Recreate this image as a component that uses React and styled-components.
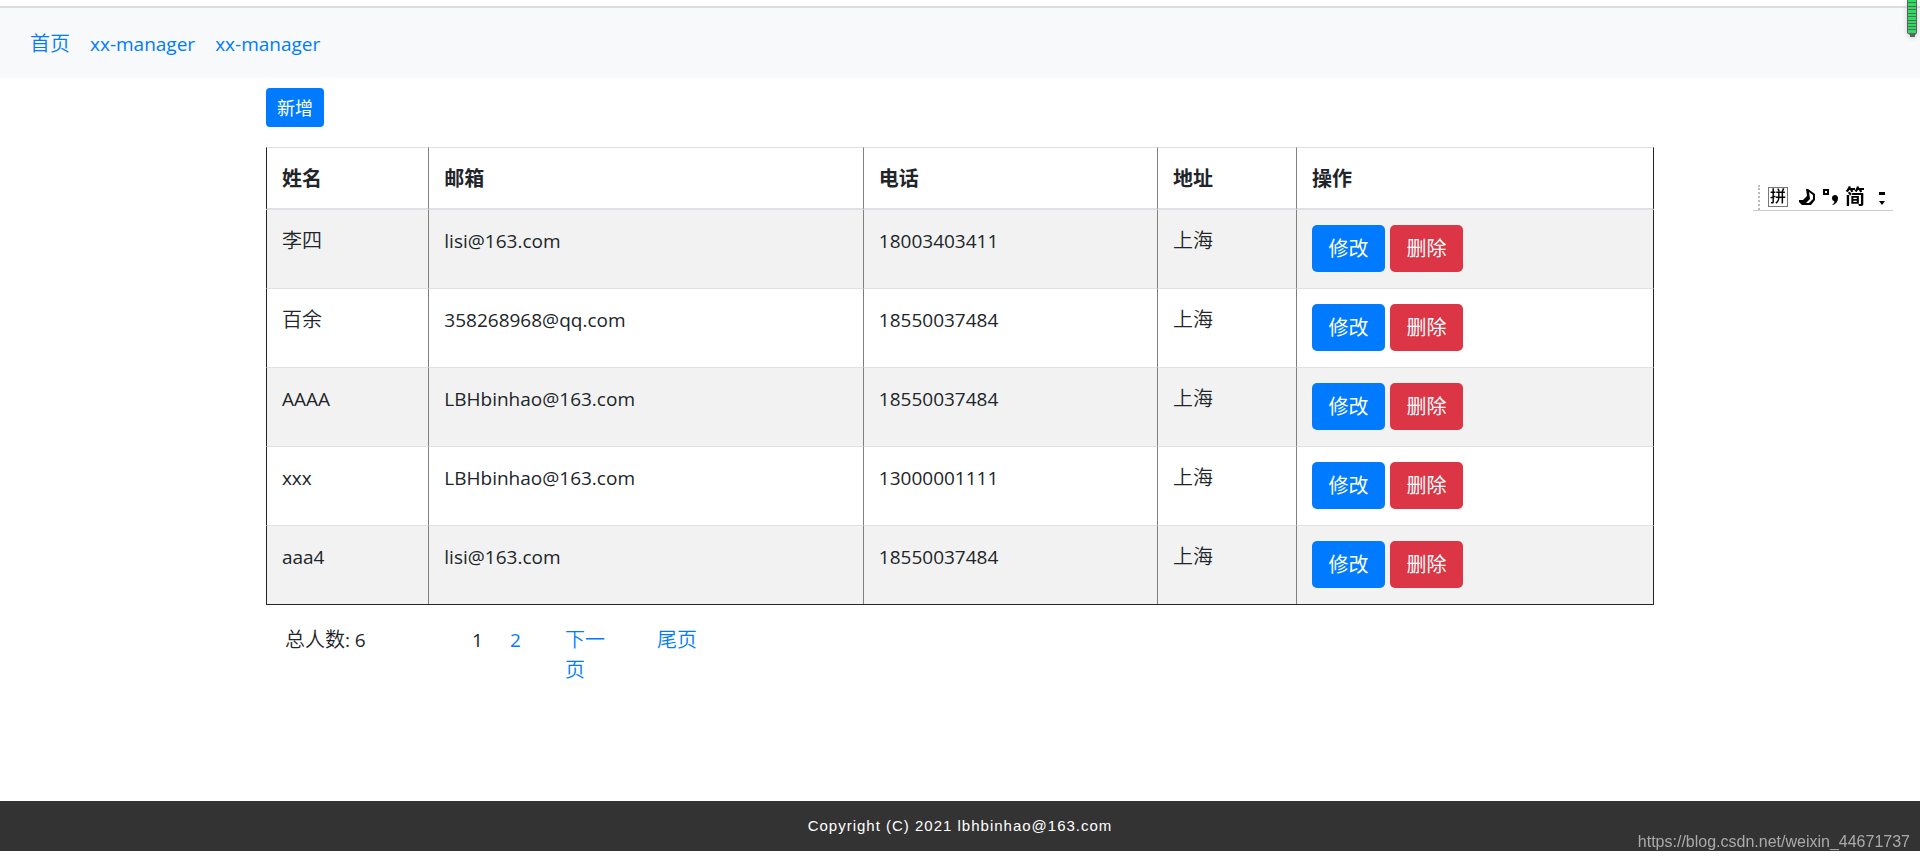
import styled, { createGlobalStyle } from "styled-components";

const GlobalStyle = createGlobalStyle`
  *,
  *::before,
  *::after {
    box-sizing: border-box;
  }

  body {
    margin: 0;
    background-color: #fff;
    color: #212529;
    font-family: "Open Sans", "Noto Sans CJK SC", sans-serif;
    font-size: 19px;
    font-weight: 400;
    line-height: 30px;
  }
`;

const blue = "#007bff";
const red = "#dc3545";

const Page = styled.div`
  min-height: 100vh;
  padding: 6px 0 10px;
  display: flex;
  flex-direction: column;
`;

const Navbar = styled.nav`
  display: flex;
  gap: 20px;
  padding: 21px 30px 19px;
  border-top: 2px solid #dadde1;
  background-color: #f8f9fa;
`;

const Link = styled.a`
  color: ${blue};
  text-decoration: none;
`;

// Chinese text is set one size up and lighter than the latin text
const Zh = styled.span`
  font-family: "Noto Sans CJK SC DemiLight", "Noto Sans CJK SC", sans-serif;
  font-size: 20px;
  font-weight: 350;
  line-height: 20px;
`;

const Container = styled.main`
  flex: 1;
  width: 72.3%;
  margin: 0 auto;
  padding-top: 10px;
`;

const Button = styled.button`
  min-width: 73px;
  height: 47px;
  padding: 0 15px;
  border: none;
  border-radius: 5px;
  background-color: ${(props) => props.$color || blue};
  color: #fff;
  font: inherit;
  font-size: 20px;
  cursor: pointer;
`;

const AddButton = styled(Button)`
  display: block;
  min-width: 58px;
  height: 39px;
  padding: 0 10px;
  border-radius: 4px;
  font-size: 18px;
`;

const Table = styled.table`
  width: 100%;
  margin: 20px 0;
  table-layout: fixed;
  border-spacing: 0;
  border-bottom: 1px solid #212529;

  th,
  td {
    border-left: 1px solid #808080;
  }

  th:first-child,
  td:first-child {
    border-left-color: #212529;
  }

  th:last-child,
  td:last-child {
    border-right: 1px solid #212529;
  }
`;

const Col = styled.col`
  width: ${(props) => props.$width};
`;

const Th = styled.th`
  height: 63px;
  padding: 16px 15px 14px;
  border-top: 1px solid #dee2e6;
  border-bottom: 2px solid #dee2e6;
  font-size: 20px;
  font-weight: 700;
  text-align: left;
`;

const Tr = styled.tr`
  &:nth-of-type(odd) {
    background-color: #f2f2f2;
  }

  & + & td {
    border-top: 1px solid #dee2e6;
  }
`;

const Td = styled.td`
  height: 79px;
  padding: ${(props) => (props.$actions ? "15px" : "16px 15px 14px")};
  vertical-align: top;

  ${Tr}:first-child & {
    height: 78px;
  }
`;

const Actions = styled.div`
  display: flex;
  gap: 5px;
`;

const Pager = styled.div`
  display: flex;
  padding-left: 19px;
`;

const PageItem = styled.div`
  width: ${(props) => props.$width};
`;

const PageLink = styled(Link)`
  display: block;
  max-width: 50px;
`;

const Footer = styled.footer`
  display: flex;
  align-items: center;
  justify-content: center;
  height: 50px;
  background-color: #333;
  color: #fff;
  font-family: "Liberation Sans", Arial, sans-serif;
  font-size: 15px;
  letter-spacing: 1px;
`;

const Watermark = styled.div`
  position: fixed;
  right: 10px;
  bottom: 4px;
  color: #aaa;
  font-family: "Liberation Sans", Arial, sans-serif;
  font-size: 16px;
`;

const Battery = styled.svg`
  position: fixed;
  top: 0;
  right: 2px;
  filter: drop-shadow(0 1px 2px #ccc);
`;

const ImeBar = styled.div`
  position: fixed;
  top: 184px;
  right: 27px;
  display: grid;
  grid-template-columns: 10px 30px 25px 22px 33px 8px;
  align-items: center;
  height: 27px;
  padding: 0 7px 0 5px;
  border-bottom: 1px solid #ccc;
  color: #000;
  font-size: 20px;
  font-weight: 700;
  line-height: 20px;
`;

const ImeGrip = styled.div`
  height: 25px;
  border-left: 2px dotted #bbb;
`;

const ImeMode = styled.div`
  width: 20px;
  height: 20px;
  border: 1px solid #777;
  font-size: 16px;
  font-weight: 500;
  line-height: 17px;
  text-align: center;
`;

const columns = [
  { title: "姓名", width: "11.7%" },
  { title: "邮箱", width: "31.3%" },
  { title: "电话", width: "21.2%" },
  { title: "地址", width: "10%" },
  { title: "操作", width: "25.8%" },
];

const users = [
  { name: "李四", zh: true, email: "lisi@163.com", phone: "18003403411" },
  { name: "百余", zh: true, email: "358268968@qq.com", phone: "18550037484" },
  { name: "AAAA", email: "LBHbinhao@163.com", phone: "18550037484" },
  { name: "xxx", email: "LBHbinhao@163.com", phone: "13000001111" },
  { name: "aaa4", email: "lisi@163.com", phone: "18550037484" },
];

const cells = [2, 6, 9, 13, 16, 20, 23, 26, 29];

const App = () => {
  return (
    <Page>
      <GlobalStyle />
      <Navbar>
        <Link href="#">
          <Zh>首页</Zh>
        </Link>
        <Link href="#">xx-manager</Link>
        <Link href="#">xx-manager</Link>
      </Navbar>
      <Container>
        <AddButton>新增</AddButton>
        <Table>
          <colgroup>
            {columns.map((c) => (
              <Col key={c.title} $width={c.width} />
            ))}
          </colgroup>
          <thead>
            <tr>
              {columns.map((c) => (
                <Th key={c.title}>{c.title}</Th>
              ))}
            </tr>
          </thead>
          <tbody>
            {users.map((u) => (
              <Tr key={u.name}>
                <Td>{u.zh ? <Zh>{u.name}</Zh> : u.name}</Td>
                <Td>{u.email}</Td>
                <Td>{u.phone}</Td>
                <Td>
                  <Zh>上海</Zh>
                </Td>
                <Td $actions>
                  <Actions>
                    <Button>修改</Button>
                    <Button $color={red}>删除</Button>
                  </Actions>
                </Td>
              </Tr>
            ))}
          </tbody>
        </Table>
        <Pager>
          <PageItem $width="187px">
            <Zh>总人数</Zh>: 6
          </PageItem>
          <PageItem $width="38px">1</PageItem>
          <PageItem $width="55px">
            <PageLink href="#">2</PageLink>
          </PageItem>
          <PageItem $width="92px">
            <PageLink href="#">
              <Zh>下一页</Zh>
            </PageLink>
          </PageItem>
          <PageItem>
            <PageLink href="#">
              <Zh>尾页</Zh>
            </PageLink>
          </PageItem>
        </Pager>
      </Container>
      <Footer>Copyright (C) 2021 lbhbinhao@163.com</Footer>
      <Watermark>https://blog.csdn.net/weixin_44671737</Watermark>
      <Battery width="12" height="38" viewBox="0 0 12 38">
        <path d="M1 0H11V33L9 35V37H4V35L1 33Z" fill="#5c6660" />
        <rect x="2" y="0" width="8" height="33" fill="#2fdc62" />
        {cells.map((y) => (
          <rect key={y} x="2" y={y} width="8" height="1" fill="#4d6f57" />
        ))}
      </Battery>
      <ImeBar>
        <ImeGrip />
        <ImeMode>拼</ImeMode>
        <svg width="18" height="20" viewBox="0 0 18 20">
          <path d="M8 2H10L17 7V13L13 18H4L1 15V13H5L9 9Z" />
          <path d="M11 5L15 8V12L11 16H8L12 12Z" fill="#fff" />
        </svg>
        <svg width="16" height="20" viewBox="0 0 16 20">
          <rect x="1" y="3" width="4" height="4" fill="none" stroke="#000" strokeWidth="2" />
          <path d="M9 11C9 7 15 7 15 11C15 15 12 18 9 18C11 16 12 15 11 14C10 14 9 13 9 11Z" />
        </svg>
        <span>简</span>
        <svg width="8" height="20" viewBox="0 0 8 20">
          <path d="M1 5H7V8H1ZM1 14H7L4 18Z" />
        </svg>
      </ImeBar>
    </Page>
  );
};

export default App;
